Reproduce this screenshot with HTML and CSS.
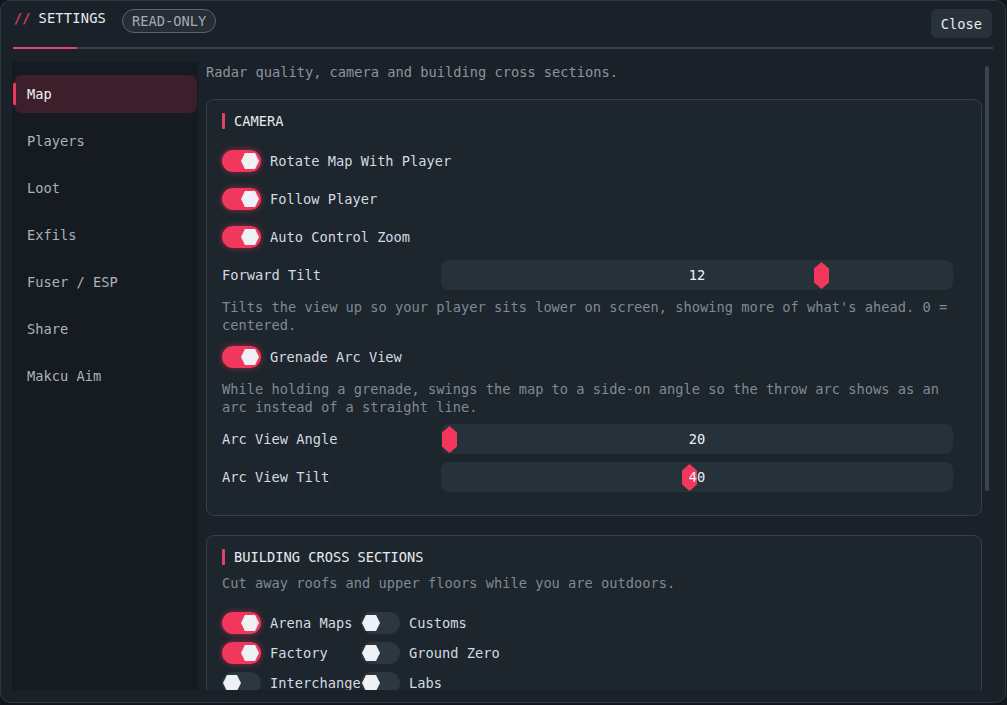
FILE: index.html
```html
<!DOCTYPE html>
<html>
<head>
<meta charset="utf-8">
<link rel="stylesheet" href="styles.css">
</head>
<body>
<div class="window">
  <header class="topbar">
    <div class="title-group">
      <span class="slashes">//</span>
      <span class="title">SETTINGS</span>
      <span class="pill">READ-ONLY</span>
    </div>
    <button class="close">Close</button>
  </header>
  <div class="rule"><span class="rule-accent"></span></div>
  <div class="body">
    <nav class="sidebar">
      <a class="nav-item active">Map</a>
      <a class="nav-item">Players</a>
      <a class="nav-item">Loot</a>
      <a class="nav-item">Exfils</a>
      <a class="nav-item">Fuser / ESP</a>
      <a class="nav-item">Share</a>
      <a class="nav-item">Makcu Aim</a>
    </nav>
    <main class="content">
      <p class="intro">Radar quality, camera and building cross sections.</p>
      <section class="card">
        <h2 class="card-title spaced">CAMERA</h2>
        <div class="row"><span class="toggle on"><span class="knob"></span></span><span class="label">Rotate Map With Player</span></div>
        <div class="row"><span class="toggle on"><span class="knob"></span></span><span class="label">Follow Player</span></div>
        <div class="row"><span class="toggle on"><span class="knob"></span></span><span class="label">Auto Control Zoom</span></div>
        <div class="slider-row">
          <span class="label">Forward Tilt</span>
          <div class="track"><span class="thumb" style="--p:0.75"></span><span class="value">12</span></div>
        </div>
        <p class="desc">Tilts the view up so your player sits lower on screen, showing more of what's ahead. 0 = centered.</p>
        <div class="row"><span class="toggle on"><span class="knob"></span></span><span class="label">Grenade Arc View</span></div>
        <p class="desc">While holding a grenade, swings the map to a side-on angle so the throw arc shows as an arc instead of a straight line.</p>
        <div class="slider-row">
          <span class="label">Arc View Angle</span>
          <div class="track"><span class="thumb" style="--p:0"></span><span class="value">20</span></div>
        </div>
        <div class="slider-row">
          <span class="label">Arc View Tilt</span>
          <div class="track"><span class="thumb" style="--p:0.484"></span><span class="value">40</span></div>
        </div>
      </section>
      <section class="card">
        <h2 class="card-title">BUILDING CROSS SECTIONS</h2>
        <p class="desc">Cut away roofs and upper floors while you are outdoors.</p>
        <div class="toggle-grid">
          <div class="row"><span class="toggle on"><span class="knob"></span></span><span class="label">Arena Maps</span></div>
          <div class="row"><span class="toggle"><span class="knob"></span></span><span class="label">Customs</span></div>
          <div class="row"><span class="toggle on"><span class="knob"></span></span><span class="label">Factory</span></div>
          <div class="row"><span class="toggle"><span class="knob"></span></span><span class="label">Ground Zero</span></div>
          <div class="row"><span class="toggle"><span class="knob"></span></span><span class="label">Interchange</span></div>
          <div class="row"><span class="toggle"><span class="knob"></span></span><span class="label">Labs</span></div>
        </div>
      </section>
    </main>
    <div class="scroll"><span class="scroll-thumb"></span></div>
  </div>
</div>
</body>
</html>
```

FILE: styles.css
```css
* { box-sizing: border-box; }
html, body { margin: 0; padding: 0; background: #12161b; }
body {
  font-family: "DejaVu Sans Mono", "Liberation Mono", monospace;
  font-size: 13.7px;
  line-height: 18px;
  color: #d3dae1;
}
.window {
  width: 1006px;
  height: 703px;
  background: #1b2129;
  border: 1px solid #2e3842;
  border-radius: 10px;
  overflow: hidden;
  display: flex;
  flex-direction: column;
}
.topbar {
  height: 46px;
  display: flex;
  justify-content: space-between;
  align-items: flex-start;
  padding: 8px 13px 0 13px;
}
.title-group {
  display: flex;
  align-items: center;
  height: 24px;
}
.slashes { color: #e0436a; margin-right: 8px; position: relative; top: -3px; }
.title { color: #e6ebf0; letter-spacing: 0.2px; position: relative; top: -3px; }
.pill {
  margin-left: 16px;
  height: 24px;
  padding: 0 9px;
  border: 1px solid #5b646d;
  border-radius: 12px;
  background: #262d35;
  color: #a3abb3;
  display: flex;
  align-items: center;
}
.close {
  height: 29px;
  padding: 0 10px;
  border: none;
  border-radius: 6px;
  background: #29323b;
  color: #e6ebf0;
  font: inherit;
}
.rule {
  height: 2px;
  margin: 0 12px;
  background: #39424b;
  display: flex;
}
.rule-accent { width: 64px; background: #e0436a; }
.body {
  margin-top: 13px;
  height: 628px;
  display: flex;
  padding-left: 11px;
}
.sidebar {
  width: 186px;
  flex: none;
  background: #161b21;
  padding: 13px 1px 0 2px;
  display: flex;
  flex-direction: column;
  gap: 9px;
}
.nav-item {
  position: relative;
  height: 38px;
  display: flex;
  align-items: center;
  padding-left: 13px;
  border-radius: 8px;
  color: #aab2ba;
}
.nav-item.active { background: #3d1f2b; color: #eef1f4; }
.nav-item.active::before {
  content: "";
  position: absolute;
  left: -1px;
  top: 8px;
  width: 3px;
  height: 22px;
  background: #f0365a;
  border-radius: 1px;
}
.content {
  width: 776px;
  flex: none;
  margin-left: 8px;
  overflow: hidden;
  padding-top: 1px;
}
.intro { margin: 0 0 18px 0; color: #8a949d; }
.card {
  background: #1d252d;
  border: 1px solid #343f49;
  border-radius: 8px;
  padding: 12px 15px 23px 15px;
  display: flex;
  flex-direction: column;
  gap: 8px;
  margin-bottom: 19px;
}
.card-title {
  margin: 0;
  font-size: inherit;
  font-weight: normal;
  color: #e6ebf0;
  display: flex;
  align-items: center;
  gap: 9px;
  height: 18px;
}
.card-title.spaced { margin-bottom: 8px; }
.card-title::before {
  content: "";
  width: 3px;
  height: 16px;
  background: #e0436a;
  border-radius: 1px;
}
.row {
  height: 30px;
  display: flex;
  align-items: center;
  gap: 9px;
}
.label { color: #d3dae1; white-space: nowrap; }
.toggle {
  position: relative;
  width: 39px;
  height: 22px;
  border-radius: 11px;
  background: #2d3741;
  flex: none;
}
.toggle.on {
  background: #f2375c;
  box-shadow: 0 0 6px rgba(242, 55, 92, 0.55);
}
.knob {
  position: absolute;
  top: 3px;
  left: 1px;
  width: 18px;
  height: 16px;
  background: #eef2f6;
  clip-path: polygon(22% 0, 78% 0, 100% 50%, 78% 100%, 22% 100%, 0 50%);
}
.toggle.on .knob { left: auto; right: 2px; }
.slider-row {
  height: 30px;
  display: grid;
  grid-template-columns: 219px 512px;
  align-items: center;
}
.track {
  position: relative;
  height: 30px;
  border-radius: 8px;
  background: #27313a;
  display: flex;
  align-items: center;
  justify-content: center;
}
.thumb {
  position: absolute;
  top: 2px;
  left: calc(1px + var(--p) * 496px);
  width: 15px;
  height: 27px;
  background: #f2375c;
  clip-path: polygon(50% 0, 100% 24%, 100% 76%, 50% 100%, 0 76%, 0 24%);
}
.value { position: relative; color: #eef1f4; }
.desc { margin: 0; color: #7f8a94; }
.toggle-grid {
  margin-top: 8px;
  display: grid;
  grid-template-columns: 139px 139px;
  grid-auto-rows: 30px;
}
.scroll {
  width: 4px;
  margin-left: 3px;
  padding-top: 4px;
  flex: none;
}
.scroll-thumb {
  display: block;
  width: 4px;
  height: 425px;
  background: #3a4550;
  border-radius: 2px;
}
```
